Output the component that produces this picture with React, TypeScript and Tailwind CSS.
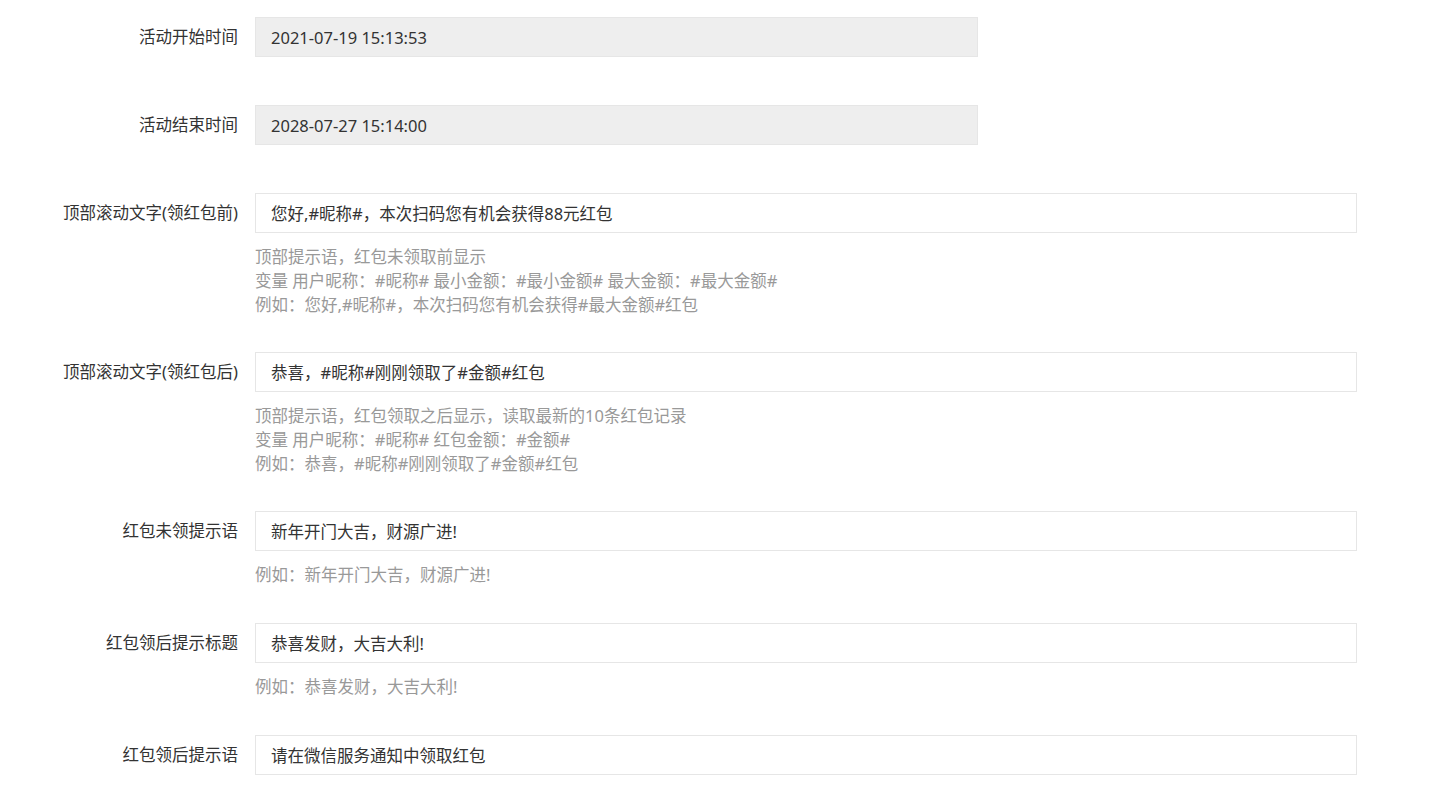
import React from 'react';

type Field = {
  label: string;
  value: string;
  disabled?: boolean;
  help?: string[];
};

const fields: Field[] = [
  { label: '活动开始时间', value: '2021-07-19 15:13:53', disabled: true },
  { label: '活动结束时间', value: '2028-07-27 15:14:00', disabled: true },
  {
    label: '顶部滚动文字(领红包前)',
    value: '您好,#昵称#，本次扫码您有机会获得88元红包',
    help: [
      '顶部提示语，红包未领取前显示',
      '变量 用户昵称：#昵称# 最小金额：#最小金额# 最大金额：#最大金额#',
      '例如：您好,#昵称#，本次扫码您有机会获得#最大金额#红包',
    ],
  },
  {
    label: '顶部滚动文字(领红包后)',
    value: '恭喜，#昵称#刚刚领取了#金额#红包',
    help: [
      '顶部提示语，红包领取之后显示，读取最新的10条红包记录',
      '变量 用户昵称：#昵称# 红包金额：#金额#',
      '例如：恭喜，#昵称#刚刚领取了#金额#红包',
    ],
  },
  { label: '红包未领提示语', value: '新年开门大吉，财源广进!', help: ['例如：新年开门大吉，财源广进!'] },
  { label: '红包领后提示标题', value: '恭喜发财，大吉大利!', help: ['例如：恭喜发财，大吉大利!'] },
  { label: '红包领后提示语', value: '请在微信服务通知中领取红包' },
];

const FormRow = ({ field }: { field: Field }) => {
  const spacing = !field.help ? 'mb-[48px]' : field.help.length > 1 ? 'mb-[35px]' : 'mb-[36px]';
  return (
    <div className={spacing}>
      <div className="flex items-center">
        <label className="w-[238px] shrink-0 text-right text-[#333]">{field.label}</label>
        <input
          readOnly
          value={field.value}
          disabled={field.disabled}
          className={`ml-[17px] h-[40px] border border-[#e6e6e6] pl-[15px] text-[#333] outline-none ${
            field.disabled ? 'w-[723px] bg-[#eeeeee]' : 'w-[1102px] bg-white'
          }`}
        />
      </div>
      {field.help && (
        <div className="ml-[255px] mt-[12px] leading-[24px] text-[#999]">
          {field.help.map((line) => (
            <div key={line}>{line}</div>
          ))}
        </div>
      )}
    </div>
  );
};

export default function App() {
  return (
    <div
      className="min-h-screen bg-white pt-[17px] text-[16.5px]"
      style={{ fontFamily: '"Noto Sans", "Noto Sans CJK SC", sans-serif' }}
    >
      {fields.map((f) => (
        <FormRow key={f.label} field={f} />
      ))}
    </div>
  );
}
